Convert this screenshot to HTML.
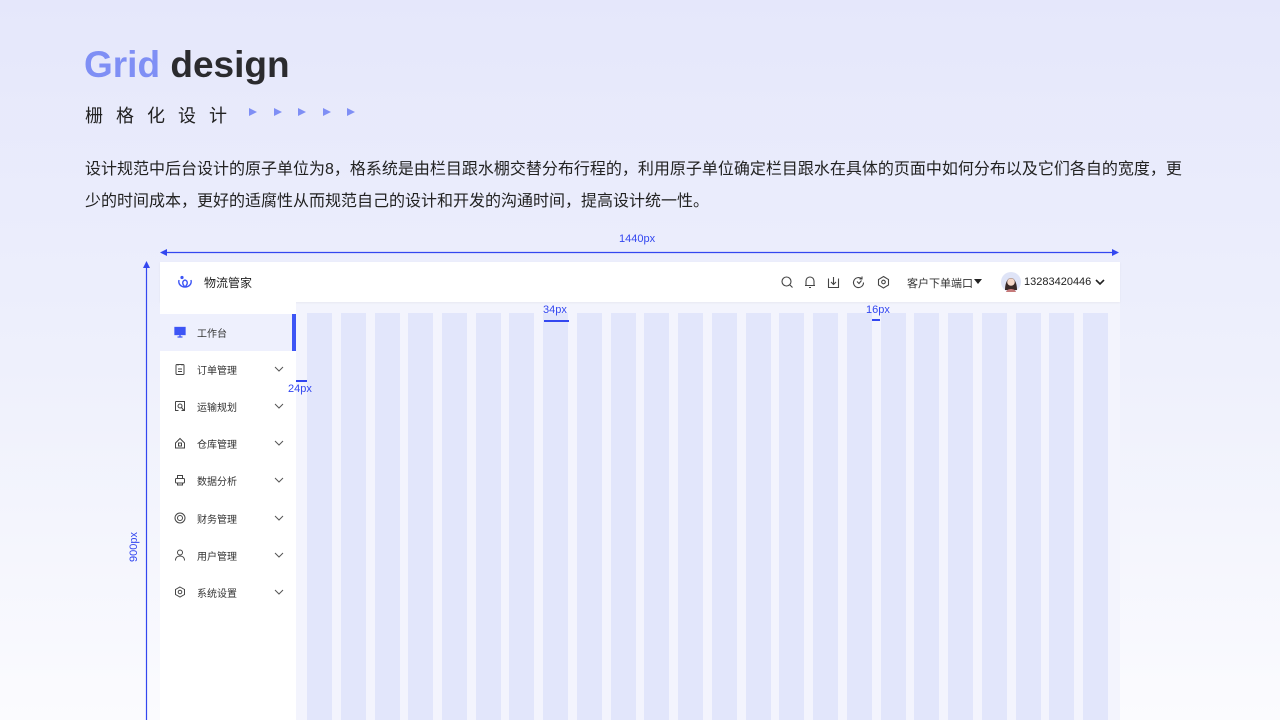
<!DOCTYPE html>
<html><head><meta charset="utf-8"><style>
*{margin:0;padding:0;box-sizing:border-box}
body{width:1280px;height:720px;overflow:hidden;position:relative;font-family:"Liberation Sans","Noto Sans CJK SC",sans-serif;background:linear-gradient(180deg,#e5e7fb 0%,#eef0fc 50%,#fbfbfe 100%)}
.abs{position:absolute}
.title{left:84px;top:44px;font-size:37px;font-weight:bold;letter-spacing:0;color:#2b2b2e}
.title span{color:#7f8ff5}
.sub{left:85px;top:102px;font-size:18px;letter-spacing:13px;color:#222}
.tri{top:108px;width:0;height:0;border-left:8px solid #7f8ff5;border-top:4.5px solid transparent;border-bottom:4.5px solid transparent}
.para{left:85px;top:154px;font-size:16px;line-height:32px;letter-spacing:0;color:#222}
.blue{color:#3347f0}
.header{left:160px;top:262px;width:960px;height:40px;background:#fff;box-shadow:0 1px 2px rgba(0,0,0,.05)}
.side{left:160px;top:302px;width:136px;height:418px;background:#fff}
.main{left:296px;top:302px;width:824px;height:418px;background:#f3f4fd}
.col{top:313px;width:25px;height:407px;background:#e2e6fb}
.item{position:absolute;left:0;width:136px;height:37px;font-size:10px;color:#333;display:flex;align-items:center}
.item .ic{position:absolute;left:14px;top:12px;width:12px;height:12px}
.item .t{position:absolute;left:37px}
.item .ch{position:absolute;left:114px;top:15px}
</style></head><body>
<div class="abs title"><span>Grid</span> design</div>
<div class="abs sub">栅格化设计</div>
<div class="abs tri" style="left:249px"></div>
<div class="abs tri" style="left:274px"></div>
<div class="abs tri" style="left:298px"></div>
<div class="abs tri" style="left:323px"></div>
<div class="abs tri" style="left:347px"></div>
<div class="abs para">设计规范中后台设计的原子单位为8，格系统是由栏目跟水棚交替分布行程的，利用原子单位确定栏目跟水在具体的页面中如何分布以及它们各自的宽度，更<br>少的时间成本，更好的适腐性从而规范自己的设计和开发的沟通时间，提高设计统一性。</div>

<svg class="abs" style="left:0;top:0" width="1280" height="720">
<line x1="162" y1="252.5" x2="1116" y2="252.5" stroke="#3347f0" stroke-width="1.2"/>
<path d="M160 252.5 L167 249 L167 256Z M1119 252.5 L1112 249 L1112 256Z" fill="#3347f0"/>
<line x1="146.5" y1="264" x2="146.5" y2="720" stroke="#3347f0" stroke-width="1.2"/>
<path d="M146.5 261 L143 268 L150 268Z" fill="#3347f0"/>
</svg>
<div class="abs blue" style="left:619px;top:233px;font-size:11px">1440px</div>
<div class="abs blue" style="left:128px;font-size:11px;transform:rotate(-90deg);transform-origin:left top;top:562px">900px</div>

<div class="abs main"></div>
<div id="cols"></div>
<div class="abs header">
 <svg class="abs" style="left:17px;top:13px" width="16" height="14" viewBox="0 0 16 14"><path d="M2 5 C1 9 4 12 8 12 C12 12 15 9 14 5 M8 12 C5 9 5 6 8 5 C11 6 11 9 8 12" fill="none" stroke="#3d55f5" stroke-width="1.4"/><circle cx="5" cy="2.5" r="1.6" fill="#3d55f5"/></svg>
 <div class="abs" style="left:44px;top:12px;font-size:12px;color:#222">物流管家</div>
 <svg class="abs" style="left:620px;top:13px" width="110" height="14" viewBox="0 0 110 14" fill="none" stroke="#444" stroke-width="1.1">
  <circle cx="6.5" cy="6.5" r="4.5"/><path d="M10 10l2.5 2.5"/>
  <path d="M26 10.5V6a4 4 0 018 0v4.5zM25 10.5h10M29 12.5h2"/>
  <path d="M49 4H48.5v8.5h10V4H58M53.5 2v7M51 7l2.5 2.5L56 7"/>
  <path d="M82 4a5 5 0 10 1.5 3.5M82 1.5V4h-2.5M77 6.5l2 2 2.5-3"/>
  <path d="M103.5 1.5l5 3v5.5l-5 3-5-3V4.5z"/><circle cx="103.5" cy="7" r="1.8"/>
 </svg>
 <div class="abs" style="left:747px;top:13px;font-size:11px;color:#333">客户下单端口</div>
 <svg class="abs" style="left:814px;top:17px" width="8" height="5"><path d="M0 0h8L4 5z" fill="#222"/></svg>
 <svg class="abs" style="left:841px;top:10px" width="20" height="20" viewBox="0 0 20 20"><circle cx="10" cy="10" r="10" fill="#dfe4f7"/><path d="M4 18c0-6 2-12 6-12s6 6 6 12z" fill="#3a2a28"/><circle cx="10" cy="10" r="3.8" fill="#f6d8c8"/><path d="M5 20c1-4 9-4 10 0z" fill="#c57a7a"/></svg>
 <div class="abs" style="left:864px;top:14px;font-size:11px;color:#222">13283420446</div>
 <svg class="abs" style="left:935px;top:17px" width="10" height="7"><path d="M1 1l4 4 4-4" fill="none" stroke="#222" stroke-width="1.6"/></svg>
</div>
<div class="abs side">
 <div class="item" style="top:12px;background:#eef0fd"><svg class="ic" viewBox="0 0 12 12" fill="none" stroke="#3d55f5" stroke-width="1.3"><rect x="1" y="1.5" width="10" height="7" fill="#3d55f5"/><path d="M6 8.5v2.5M3.5 11h5"/></svg><span class="t">工作台</span></div>
 <div class="abs" style="left:132px;top:12px;width:4px;height:37px;background:#3d55f5"></div>
</div>
<div class="abs blue" style="left:543px;top:304px;font-size:11px">34px</div>
<div class="abs" style="left:544px;top:320px;width:25px;height:1.5px;background:#3347f0"></div>
<div class="abs blue" style="left:866px;top:304px;font-size:11px">16px</div>
<div class="abs" style="left:872px;top:319px;width:8px;height:2px;background:#3347f0"></div>
<div class="abs" style="left:296px;top:380px;width:11px;height:1.5px;background:#3347f0"></div>
<div class="abs blue" style="left:288px;top:383px;font-size:11px">24px</div>
<script>
var c='';for(var i=0;i<24;i++){c+='<div class="abs col" style="left:'+(307+i*33.74).toFixed(1)+'px"></div>';}
document.getElementById('cols').innerHTML=c;
var items=[['订单管理','<rect x="2" y="1.5" width="8" height="10" rx="1"/><path d="M4 1v1.5M8 1v1.5M4 6h4M4 8.5h4"/>'],
['运输规划','<path d="M1.5 1.5h9v9h-3M1.5 1.5v9h3"/><circle cx="6" cy="6" r="2"/><path d="M7.5 7.5l2.5 3"/>'],
['仓库管理','<path d="M1.5 6L6 1.5 10.5 6v5h-9z"/><rect x="4.5" y="6" width="3" height="3"/>'],
['数据分析','<rect x="1.5" y="4.5" width="9" height="4.5" rx="1"/><path d="M3.5 4.5V1.5h5v3M3.5 9v2h5V9"/>'],
['财务管理','<circle cx="6" cy="6" r="5"/><circle cx="6" cy="6" r="2.5"/>'],
['用户管理','<circle cx="6" cy="3.5" r="2.5"/><path d="M1.5 11.5c0-3 2-4.5 4.5-4.5s4.5 1.5 4.5 4.5"/>'],
['系统设置','<path d="M6 1l4.5 2.5v5L6 11 1.5 8.5v-5z"/><circle cx="6" cy="6" r="1.8"/>']];
var s=document.querySelector('.side'),h='';
items.forEach(function(it,k){h+='<div class="item" style="top:'+(48.5+k*37.3)+'px"><svg class="ic" viewBox="0 0 12 12" fill="none" stroke="#444" stroke-width="1">'+it[1]+'</svg><span class="t">'+it[0]+'</span><svg class="ch" width="10" height="6"><path d="M1 1l4 4 4-4" fill="none" stroke="#555" stroke-width="1"/></svg></div>';});
s.insertAdjacentHTML('beforeend',h);
</script>
</body></html>
